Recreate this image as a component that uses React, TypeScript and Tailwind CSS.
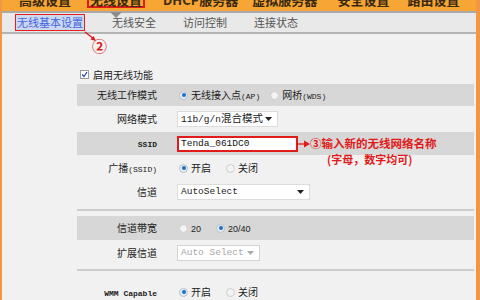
import React from 'react';

const cjk = { fontFamily: '"Noto Sans CJK SC", "Noto Sans", sans-serif' };
const mono = { fontFamily: '"Liberation Mono", "Noto Sans CJK SC", monospace' };

const Radio: React.FC<{ checked?: boolean }> = ({ checked }) =>
  checked ? (
    <span className="flex h-[9px] w-[9px] items-center justify-center rounded-full border border-[#b9c3cd] bg-[#e4ebf2]">
      <span className="h-[4px] w-[4px] rounded-full bg-[#1d6fc4]" />
    </span>
  ) : (
    <span className="block h-[9px] w-[9px] rounded-full border border-[#cdcdcd] bg-[#f3f3f3]" />
  );

const Caret: React.FC<{ color?: string }> = ({ color = '#222' }) => (
  <svg width="7" height="4" viewBox="0 0 7 4">
    <path d="M0 0h7L3.5 4z" fill={color} />
  </svg>
);

const Select: React.FC<{ text: React.ReactNode; width: string; disabled?: boolean }> = ({ text, width, disabled }) => (
  <div
    className={`flex h-[16px] items-center justify-between border bg-white pl-[3px] pr-[5px] ${width} ${
      disabled ? 'border-[#d4d4d4] text-[#a8a8a8]' : 'border-[#dcdcdc] text-[#222]'
    }`}
    style={mono}
  >
    <span className="whitespace-nowrap text-[9.5px] leading-none">{text}</span>
    <Caret color={disabled ? '#aaa' : '#222'} />
  </div>
);

const Row: React.FC<{ label: React.ReactNode; gray?: boolean; h: string; children: React.ReactNode }> = ({
  label,
  gray,
  h,
  children,
}) => (
  <div className={`relative flex items-center ${h} ${gray ? 'bg-[#d7d7d7]' : ''}`}>
    <div className="w-[80px] text-right text-[10px] leading-none text-[#222]">{label}</div>
    <div className="ml-[20px] flex items-center">{children}</div>
  </div>
);

const Opt: React.FC<{ checked?: boolean; children: React.ReactNode; className?: string }> = ({
  checked,
  children,
  className = '',
}) => (
  <div className={`flex items-center gap-[3px] ${className}`}>
    <Radio checked={checked} />
    <span className="text-[10px] leading-none text-[#222]">{children}</span>
  </div>
);

const topNav = [
  { t: '高级设置', w: 'ml-[17px] mt-[-7px]' },
  { t: '无线设置', w: 'ml-[16px] mt-[-9px]', boxed: true },
  { t: 'DHCP服务器', w: 'ml-[18px] mt-[-7px]' },
  { t: '虚拟服务器', w: 'ml-[14px] mt-[-7px]' },
  { t: '安全设置', w: 'ml-[20px] mt-[-7px]' },
  { t: '路由设置', w: 'ml-[18px] mt-[-7px]' },
];

export default function App() {
  return (
    <div
      className="relative h-[300px] w-[480px] overflow-hidden border-l-[2px] border-r-[4px] border-[#f29646] bg-[#f1f1f1]"
      style={cjk}
    >
      {/* top menu, clipped */}
      <div className="flex h-[11px] items-start overflow-hidden bg-[#f7a535]">
        {topNav.map((n) => (
          <div
            key={n.t}
            className={`${n.w} shrink-0 whitespace-nowrap text-[13px] font-bold leading-[13px] text-[#3a2a10] ${
              n.boxed ? 'border-2 border-[#e11a1a] px-[1px]' : ''
            }`}
          >
            {n.t}
          </div>
        ))}
      </div>
      <div className="h-[2px] bg-[#a9a9a9]" />

      {/* sub tabs */}
      <div className="flex h-[21px] items-end gap-[27px] border-b-2 border-[#b3b3b3] bg-[#e9e9e9] pb-[1px] pl-[13px] text-[11px] leading-none text-[#555]">
        <div className="border border-[#e51e1e] bg-[#cdd7ef] px-[1px] py-[2px] text-[#3f66e0]">无线基本设置</div>
        <div className="pb-[3px]">无线安全</div>
        <div className="pb-[3px]">访问控制</div>
        <div className="pb-[3px]">连接状态</div>
      </div>

      {/* pointer under 无线设置 */}
      <svg className="absolute left-[108px] top-[12px]" width="12" height="6" viewBox="0 0 12 6">
        <path d="M0 0h12L6 6z" fill="#8d8d8d" />
      </svg>

      {/* annotation 2 */}
      <svg className="absolute left-[82px] top-[31px]" width="14" height="12" viewBox="0 0 14 12">
        <path d="M1 1L10 8" stroke="#e11a1a" strokeWidth="1.4" />
        <path d="M12 10L6.5 8.5L9.5 5z" fill="#e11a1a" />
      </svg>
      <div className="absolute left-[90px] top-[38px] text-[15px] font-bold leading-none text-[#e11a1a]">②</div>

      {/* form */}
      <div className="ml-[75px] mr-[2px] pt-[31px]">
        <div className="flex h-[19px] items-center gap-[4px] pl-[3px]">
          <span className="flex h-[9px] w-[9px] items-center justify-center border border-[#9a9a9a] bg-white">
            <svg width="7" height="7" viewBox="0 0 7 7">
              <path d="M1 3.5L3 5.5L6 1" stroke="#2b4fb8" strokeWidth="1.3" fill="none" />
            </svg>
          </span>
          <span className="text-[10px] leading-none text-[#222]">启用无线功能</span>
        </div>

        <Row label="无线工作模式" gray h="h-[22px]">
          <Opt checked className="ml-[2px]">
            无线接入点<span className="text-[8px]" style={mono}>(AP)</span>
          </Opt>
          <Opt className="ml-[10px]">
            网桥<span className="text-[8px]" style={mono}>(WDS)</span>
          </Opt>
        </Row>

        <Row label="网络模式" h="h-[26px]">
          <Select width="w-[101px]" text={<>11b/g/n<span className="text-[10.5px]">混合模式</span></>} />
        </Row>

        <Row label={<span className="text-[8px] font-bold" style={mono}>SSID</span>} gray h="h-[23px]">
          <div
            className="flex h-[16px] w-[121px] items-center border-2 border-[#e11a1a] bg-white pl-[2px] text-[9.5px] leading-none text-[#111]"
            style={mono}
          >
            Tenda_061DC0
          </div>
          <div className="relative flex items-center">
            <svg width="12" height="8" viewBox="0 0 12 8">
              <path d="M0 4h7" stroke="#e11a1a" strokeWidth="1.3" />
              <path d="M6 0.5L12 4L6 7.5z" fill="#e11a1a" />
            </svg>
            <span className="whitespace-nowrap text-[11.5px] font-bold leading-none text-[#e11a1a]">
              ③输入新的无线网络名称
            </span>
            <span className="absolute left-[29px] top-[16px] whitespace-nowrap text-[11px] font-bold leading-none text-[#e11a1a]">
              (字母，数字均可)
            </span>
          </div>
        </Row>

        <Row
          label={
            <>
              广播<span className="text-[8px]" style={mono}>(SSID)</span>
            </>
          }
          h="h-[26px]"
        >
          <Opt checked className="ml-[2px]">开启</Opt>
          <Opt className="ml-[15px]">关闭</Opt>
        </Row>

        <Row label="信道" h="h-[21px]">
          <Select width="w-[133px]" text="AutoSelect" />
        </Row>

        <div className="mt-[7px] h-[2px] bg-[#cdcdcd]" />
        <div className="h-[5px]" />

        <Row label="信道带宽" gray h="h-[24px]">
          <Opt className="ml-[2px]">
            <span className="text-[9px]" style={{ fontFamily: '"Liberation Sans", sans-serif' }}>20</span>
          </Opt>
          <Opt checked className="ml-[15px]">
            <span className="text-[9px]" style={{ fontFamily: '"Liberation Sans", sans-serif' }}>20/40</span>
          </Opt>
        </Row>

        <Row label="扩展信道" h="h-[25px]">
          <Select width="w-[83px]" text="Auto Select" disabled />
        </Row>

        <div className="mt-[4px] h-[2px] bg-[#cdcdcd]" />
        <div className="h-[10px]" />

        <Row label={<span className="text-[8px] font-bold" style={mono}>WMM Capable</span>} h="h-[22px]">
          <Opt checked className="ml-[2px]">开启</Opt>
          <Opt className="ml-[15px]">关闭</Opt>
        </Row>
      </div>
    </div>
  );
}
